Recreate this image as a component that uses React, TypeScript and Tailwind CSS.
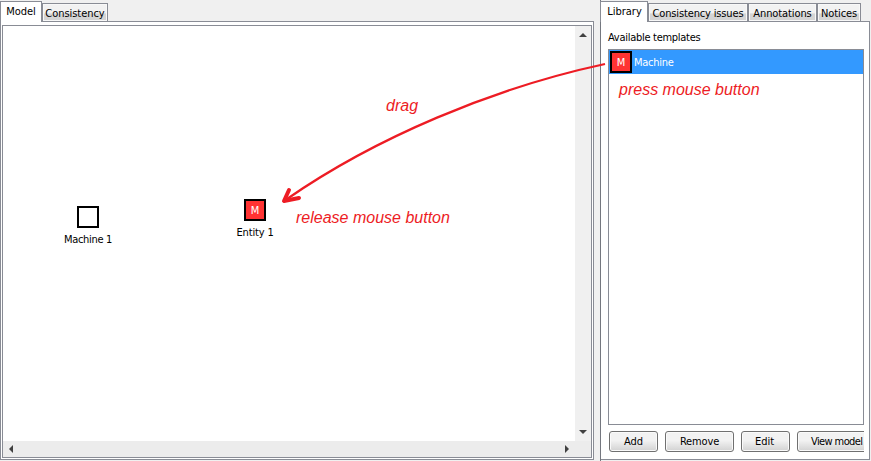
import React from "react";

type TextProps = { children: React.ReactNode; className?: string };

function Caption({ children, className = "" }: TextProps) {
  return <span className={`block shrink-0 whitespace-nowrap ${className}`}>{children}</span>;
}

type TabProps = { label: string; active?: boolean; box: string };

function Tab({ label, active = false, box }: TabProps) {
  return (
    <div
      className={`flex shrink-0 justify-center whitespace-nowrap border-[#898c95] ${box} ${
        active
          ? "z-10 -mb-px h-[21px] border border-b-0 bg-white pt-[2px]"
          : "h-[18px] border border-b-0 bg-gradient-to-b from-[#f2f2f2] from-50% to-[#d4d4d4] to-60% pt-[2px] shadow-[inset_0_0_0_1px_#f8f8f8]"
      }`}
    >
      {label}
    </div>
  );
}

function PushButton({ label, box }: { label: string; box: string }) {
  return (
    <button
      className={`flex h-[21px] shrink-0 items-center whitespace-nowrap rounded-[3px] border border-[#707070] bg-gradient-to-b from-[#f2f2f2] from-45% to-[#d2d2d2] shadow-[inset_0_0_0_1px_#fafafa] ${box}`}
    >
      {label}
    </button>
  );
}

function Template({ className = "" }: { className?: string }) {
  return (
    <div
      className={`flex size-[22px] shrink-0 items-center justify-center border-2 border-black bg-[#ff3333] text-white ${className}`}
    >
      M
    </div>
  );
}

function Arrow({ points }: { points: string }) {
  return (
    <svg className="size-[8px]" viewBox="0 0 8 8">
      <polygon points={points} fill="#404040" />
    </svg>
  );
}

export default function App() {
  return (
    <div className="relative flex h-[461px] w-[871px] overflow-hidden bg-[#f0f0f0] font-['DejaVu_Sans_Condensed','DejaVu_Sans',sans-serif] text-[11px] leading-[15px] text-black [font-stretch:condensed]">
      <section className="flex w-[594px] shrink-0 flex-col pt-px">
        <div className="flex h-[20px] items-end">
          <Tab label="Model" active box="w-[42px]" />
          <Tab label="Consistency" box="w-[66px] tracking-[-0.05px]" />
        </div>
        <div className="h-[439px] border border-[#898c95] bg-white px-px pb-px pt-[3px]">
          <div className="flex h-full flex-col border border-[#898c95]">
            <div className="flex min-h-0 flex-1">
              <div className="relative flex-1">
                <div className="absolute left-[50px] top-[180px] flex w-[70px] flex-col items-center">
                  <div className="size-[22px] border-2 border-black bg-white" />
                  <Caption className="mt-[4px] tracking-[-0.3px]">Machine 1</Caption>
                </div>
                <div className="absolute left-[217px] top-[173px] flex w-[70px] flex-col items-center">
                  <Template />
                  <Caption className="mt-[4px] tracking-[-0.15px]">Entity 1</Caption>
                </div>
              </div>
              <div className="flex w-[16px] flex-col items-center justify-between bg-[#f0f0f0] py-[5px]">
                <Arrow points="0,6 4,2 8,6" />
                <Arrow points="0,2 4,6 8,2" />
              </div>
            </div>
            <div className="flex h-[16px] items-center justify-between bg-[#ececec] pl-[4px] pr-[20px]">
              <Arrow points="6,0 2,4 6,8" />
              <Arrow points="2,0 6,4 2,8" />
            </div>
          </div>
        </div>
      </section>

      <div className="w-[6px] shrink-0" />

      <section className="flex w-[270px] shrink-0 flex-col border-l border-[#74777f] pt-px">
        <div className="-ml-px flex h-[20px] items-end">
          <Tab label="Library" active box="w-[48px] pl-px" />
          <Tab label="Consistency issues" box="w-[100px] tracking-[-0.15px]" />
          <Tab label="Annotations" box="w-[69px] tracking-[-0.1px]" />
          <Tab label="Notices" box="w-[44px] tracking-[-0.1px]" />
        </div>
        <div className="flex h-[439px] flex-col border border-l-0 border-[#898c95] bg-white pl-[7px] pr-[5px] pt-[8px]">
          <Caption className="tracking-[-0.28px]">Available templates</Caption>
          <div className="mt-[4px] h-[376px] shrink-0 border border-[#898c95]">
            <div className="flex h-[24px] items-center bg-[#3399ff] pl-px text-white">
              <Template />
              <Caption className="ml-[2px] tracking-[-0.25px]">Machine</Caption>
            </div>
          </div>
          <div className="mt-[6px] flex gap-[7px] overflow-hidden pl-px">
            <PushButton label="Add" box="w-[49px] justify-center" />
            <PushButton label="Remove" box="w-[69px] justify-center tracking-[-0.15px]" />
            <PushButton label="Edit" box="w-[49px] justify-center pr-[2px]" />
            <PushButton label="View model" box="w-[82px] justify-start pl-[13px] tracking-[-0.6px]" />
          </div>
        </div>
      </section>

      <div className="absolute inset-0 font-['Liberation_Sans',Arial,sans-serif] text-[16px] italic leading-[18px] text-[#ed1c24]">
        <span className="absolute left-[386px] top-[97px]">drag</span>
        <span className="absolute left-[296px] top-[209px] whitespace-nowrap">release mouse button</span>
        <span className="absolute left-[619px] top-[81px] whitespace-nowrap">press mouse button</span>
        <svg className="absolute inset-0" width="871" height="461" fill="none" stroke="#ed1c24">
          <path d="M605 64 C493 88 375 138 287 199" strokeWidth="2.2" />
          <path d="M289 190 L284 201 L299 198" strokeWidth="4" strokeLinecap="round" strokeLinejoin="round" />
        </svg>
      </div>
    </div>
  );
}
